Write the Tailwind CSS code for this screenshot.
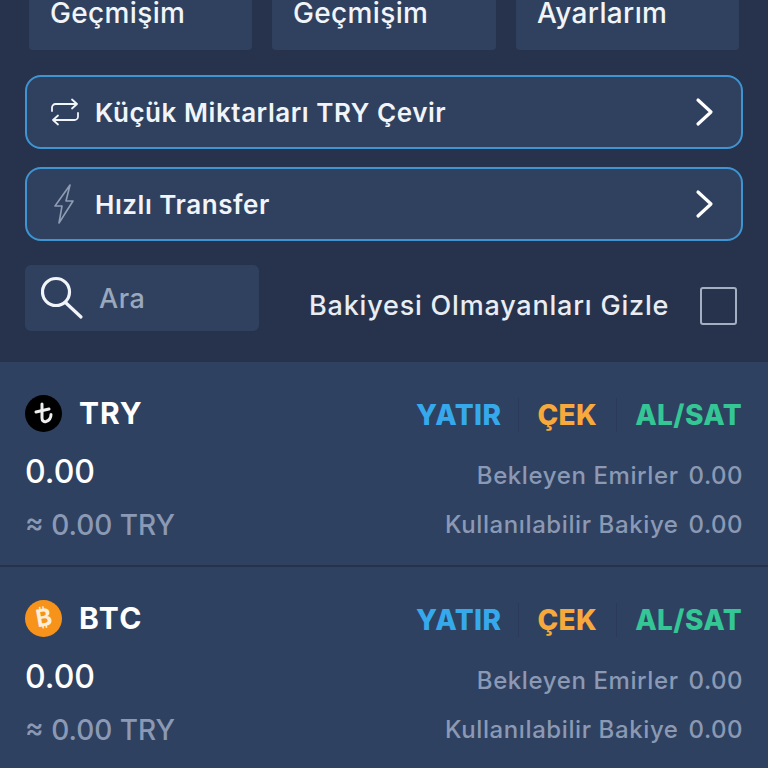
<!DOCTYPE html>
<html>
<head>
<meta charset="utf-8">
<script src="https://cdn.jsdelivr.net/npm/@tailwindcss/browser@4"></script>
</head>
<body class="bg-[#27334d]">
<div class="w-[768px] h-[768px] overflow-hidden font-['Inter',sans-serif] bg-[#27334d] text-white">
  <div class="h-[362px] flex flex-col">
    <div class="flex gap-[20px] pl-[29px] pr-[29px] h-[50px]">
      <div class="w-[223px] bg-[#30415f] rounded-b-[4px] pl-[21px] text-[28px] tracking-[0.35px] leading-[26px] font-medium text-[#f1f4f8]">Geçmişim</div>
      <div class="w-[224px] bg-[#30415f] rounded-b-[4px] pl-[21px] text-[28px] tracking-[0.35px] leading-[26px] font-medium text-[#f1f4f8]">Geçmişim</div>
      <div class="w-[223px] bg-[#30415f] rounded-b-[4px] pl-[21px] text-[28px] tracking-[0.35px] leading-[26px] font-medium text-[#f1f4f8]">Ayarlarım</div>
    </div>
    <div class="mt-[25px] mx-[25px] h-[74px] rounded-[16px] border-2 border-[#3f95d2] bg-[#30415f] flex items-center pl-[23px] pr-[26px]">
      <svg class="w-[30px] h-[30px]" viewBox="0 0 30 30" fill="none" stroke="#f1f4f8" stroke-width="1.8" stroke-linecap="round" stroke-linejoin="round">
        <path d="M2 14v-3.5a3.5 3.5 0 0 1 3.500-3.500H27M22 2.500l5 4.500-5 4.500"/>
        <path d="M28 16v3.500a3.500 3.500 0 0 1-3.500 3.500H3M8 18.500l-5 4.500 5 4.500"/>
      </svg>
      <span class="ml-[15px] text-[26px] tracking-[0.55px] font-semibold text-[#f1f4f8] flex-1">Küçük Miktarları TRY Çevir</span>
      <svg class="w-[20px] h-[30px]" viewBox="0 0 20 30" fill="none" stroke="#ffffff" stroke-width="3.200" stroke-linecap="round" stroke-linejoin="round"><path d="M3 3l13 12-13 12"/></svg>
    </div>
    <div class="mt-[18px] mx-[25px] h-[74px] rounded-[16px] border-2 border-[#3f95d2] bg-[#30415f] flex items-center pl-[23px] pr-[26px]">
      <svg class="w-[30px] h-[40px]" viewBox="0 0 30 40" fill="none" stroke="#8f9db4" stroke-width="1.600" stroke-linejoin="round">
        <path d="M20 1L5 22h7L9 39l14-22h-7z"/>
      </svg>
      <span class="ml-[15px] text-[26px] tracking-[0.55px] font-semibold text-[#f1f4f8] flex-1">Hızlı Transfer</span>
      <svg class="w-[20px] h-[30px]" viewBox="0 0 20 30" fill="none" stroke="#ffffff" stroke-width="3.200" stroke-linecap="round" stroke-linejoin="round"><path d="M3 3l13 12-13 12"/></svg>
    </div>
    <div class="mt-[24px] pl-[25px] pr-[31px] flex items-start">
      <div class="w-[234px] h-[66px] bg-[#30415f] rounded-[6px] flex items-center pl-[16px]">
        <svg class="w-[44px] h-[44px]" viewBox="0 0 44 44" fill="none" stroke="#f1f4f8" stroke-width="3.200" stroke-linecap="round"><circle cx="15" cy="16" r="13.500"/><path d="M25 27l15 14"/></svg>
        <span class="ml-[14px] mt-[2px] text-[27px] tracking-[0.5px] font-medium text-[#9aa8bd] leading-[66px]">Ara</span>
      </div>
      <span class="ml-[50px] mt-[21px] text-[27px] leading-[40px] tracking-[0.8px] font-medium text-[#e9edf3] flex-1 whitespace-nowrap">Bakiyesi Olmayanları Gizle</span>
      <div class="mt-[22px] w-[37px] h-[38px] rounded-[3px] border-2 border-[#a5afc2]"></div>
    </div>
  </div>

  <div class="bg-[#2f4160]">
    <div class="h-[205px] border-b-2 border-[#27334d] px-[25px] pt-[32px]">
      <div class="flex items-center h-[38px]">
        <div class="w-[37px] h-[37px] rounded-full bg-black flex items-center justify-center">
          <svg class="w-[22px] h-[24px]" viewBox="0 0 22 24" fill="none" stroke="#eeeeee" stroke-width="3" stroke-linecap="round"><path d="M9 3v14c0 3 2 4 4 3.500 3-1 5-4 5-7"/><path d="M3 11l13-3"/></svg>
        </div>
        <span class="ml-[17px] text-[30px] tracking-[1px] font-bold flex-1">TRY</span>
        <div class="flex items-center text-[28px] tracking-[0.4px] font-extrabold mr-[1px] mt-[4px]">
          <span class="text-[#36a9ec]">YATIR</span>
          <span class="ml-[17px] h-[34px] w-[1px] bg-[#2b3a58]"></span>
          <span class="ml-[18px] text-[#f8a93b]">ÇEK</span>
          <span class="ml-[19px] h-[34px] w-[1px] bg-[#2b3a58]"></span>
          <span class="ml-[18px] text-[#34c695]">AL/SAT</span>
        </div>
      </div>
      <div class="flex items-center mt-[20px] h-[40px]">
        <span class="text-[32px] font-medium flex-1">0.00</span>
        <span class="text-[24px] tracking-[0.6px] font-medium text-[#8b99b5] mt-[8px]">Bekleyen Emirler</span>
        <span class="ml-[10px] text-[24px] tracking-[0.5px] font-medium text-[#8b99b5] mt-[8px]">0.00</span>
      </div>
      <div class="flex items-center mt-[13px] h-[40px]">
        <span class="text-[28px] font-medium text-[#8b99b5] flex-1">≈ 0.00 TRY</span>
        <span class="text-[24px] tracking-[0.6px] font-medium text-[#8b99b5]">Kullanılabilir Bakiye</span>
        <span class="ml-[10px] text-[24px] tracking-[0.5px] font-medium text-[#8b99b5]">0.00</span>
      </div>
    </div>
    <div class="h-[204px] px-[25px] pt-[32px]">
      <div class="flex items-center h-[38px]">
        <div class="w-[37px] h-[37px] rounded-full bg-[#f7931a] flex items-center justify-center">
          <span class="text-[24px] font-bold text-[#fdeed9] -rotate-[10deg] leading-none">₿</span>
        </div>
        <span class="ml-[17px] text-[30px] tracking-[1.5px] font-bold flex-1">BTC</span>
        <div class="flex items-center text-[28px] tracking-[0.4px] font-extrabold mr-[1px] mt-[4px]">
          <span class="text-[#36a9ec]">YATIR</span>
          <span class="ml-[17px] h-[34px] w-[1px] bg-[#2b3a58]"></span>
          <span class="ml-[18px] text-[#f8a93b]">ÇEK</span>
          <span class="ml-[19px] h-[34px] w-[1px] bg-[#2b3a58]"></span>
          <span class="ml-[18px] text-[#34c695]">AL/SAT</span>
        </div>
      </div>
      <div class="flex items-center mt-[20px] h-[40px]">
        <span class="text-[32px] font-medium flex-1">0.00</span>
        <span class="text-[24px] tracking-[0.6px] font-medium text-[#8b99b5] mt-[8px]">Bekleyen Emirler</span>
        <span class="ml-[10px] text-[24px] tracking-[0.5px] font-medium text-[#8b99b5] mt-[8px]">0.00</span>
      </div>
      <div class="flex items-center mt-[13px] h-[40px]">
        <span class="text-[28px] font-medium text-[#8b99b5] flex-1">≈ 0.00 TRY</span>
        <span class="text-[24px] tracking-[0.6px] font-medium text-[#8b99b5]">Kullanılabilir Bakiye</span>
        <span class="ml-[10px] text-[24px] tracking-[0.5px] font-medium text-[#8b99b5]">0.00</span>
      </div>
    </div>
  </div>
</div>
</body>
</html>
